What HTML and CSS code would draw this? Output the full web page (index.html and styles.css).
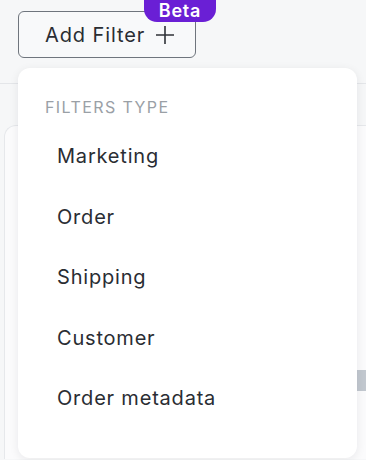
FILE: index.html
```html
<!DOCTYPE html>
<html lang="en">
<head>
    <meta charset="UTF-8">
    <meta name="viewport" content="width=device-width, initial-scale=1.0">
    <title>Add Filter</title>
    <link rel="stylesheet" href="styles.css">
</head>
<body>
    <div class="header">
        <div class="filter-wrap">
            <button class="add-filter">
                Add Filter
                <svg class="plus" width="20" height="20" viewBox="0 0 20 20">
                    <path d="M10 1v18M1 10h18" stroke="#2f3237" stroke-width="1.6" fill="none"/>
                </svg>
            </button>
            <span class="beta">Beta</span>
        </div>
    </div>
    <div class="content">
        <div class="card">
            <div class="card-bar"></div>
        </div>
    </div>

    <div class="dropdown">
        <div class="dropdown-title">Filters type</div>
        <ul class="dropdown-list">
            <li>Marketing</li>
            <li>Order</li>
            <li>Shipping</li>
            <li>Customer</li>
            <li>Order metadata</li>
        </ul>
    </div>
</body>
</html>
```

FILE: styles.css
```css
body {
    margin: 0;
    height: 460px;
    overflow: hidden;
    font-family: Inter, "Noto Sans", sans-serif;
    background-color: #f6f7f8;
    color: #2a2d33;
    position: relative;
}
.header {
    height: 84px;
    box-sizing: border-box;
    padding: 11px 0 0 18px;
    border-bottom: 1px solid #e4e6e9;
}
.filter-wrap {
    position: relative;
    display: inline-block;
}
.add-filter {
    display: flex;
    align-items: center;
    gap: 10px;
    width: 178px;
    height: 47px;
    padding: 0 0 0 26px;
    box-sizing: border-box;
    font-family: inherit;
    font-size: 20px;
    letter-spacing: 0.9px;
    color: #2a2d33;
    background-color: #f8f9fa;
    border: 1px solid #6f757d;
    border-radius: 6px;
    cursor: pointer;
}
.beta {
    position: absolute;
    top: -25px;
    left: 126px;
    width: 72px;
    height: 36px;
    box-sizing: border-box;
    padding-top: 15px;
    text-align: center;
    font-size: 18px;
    font-weight: 600;
    letter-spacing: 0.8px;
    line-height: 20px;
    color: #fff;
    background-color: #6a1fd5;
    border-radius: 13px;
}
.content {
    padding: 41px 0 0 4px;
}
.card {
    position: relative;
    height: 334px;
    box-sizing: border-box;
    background: #fbfbfc;
    border: 1px solid #e6e8eb;
    border-right: none;
    border-bottom: none;
    border-radius: 12px 0 0 0;
}
.card-bar {
    position: absolute;
    top: 244px;
    right: 0;
    width: 9px;
    height: 21px;
    background: #c2c8cf;
}
.dropdown {
    position: absolute;
    top: 68px;
    left: 18px;
    width: 339px;
    height: 390px;
    box-sizing: border-box;
    padding: 27px 0 0 0;
    background: #fff;
    border-radius: 12px;
    box-shadow: 0 2px 10px rgba(20, 30, 40, 0.08);
}
.dropdown-title {
    padding-left: 27px;
    font-size: 16px;
    letter-spacing: 1.4px;
    line-height: 24px;
    text-transform: uppercase;
    color: #9aa0a6;
}
.dropdown-list {
    list-style: none;
    margin: 0;
    padding: 7px 0 0 0;
}
.dropdown-list li {
    padding-left: 39px;
    height: 60.5px;
    line-height: 60px;
    font-size: 20px;
    letter-spacing: 0.8px;
    color: #2a2d33;
}
```
